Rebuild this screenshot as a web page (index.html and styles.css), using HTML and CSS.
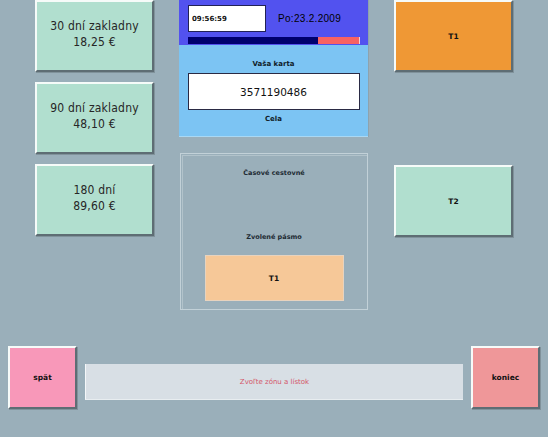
FILE: index.html
```html
<!DOCTYPE html>
<html lang="sk">
<head>
<meta charset="utf-8">
<title>Predaj cestovného</title>
<link rel="stylesheet" href="styles.css">
</head>
<body>
<div class="screen">
  <div class="upper">
    <div class="col col-side">
      <div class="btn btn-mint btn-fare"><span>30 dní zakladny</span><span>18,25 €</span></div>
      <div class="btn btn-mint btn-fare"><span>90 dní zakladny</span><span>48,10 €</span></div>
      <div class="btn btn-mint btn-fare"><span>180 dní</span><span>89,60 €</span></div>
    </div>

    <div class="col col-center">
      <div class="card-panel">
        <div class="status">
          <div class="status-row">
            <div class="clock">09:56:59</div>
            <div class="date">Po:23.2.2009</div>
          </div>
          <div class="progress"><div class="progress-fill" style="width:130px"></div></div>
        </div>
        <div class="card-info">
          <div class="label">Vaša karta</div>
          <div class="card-number">3571190486</div>
          <div class="label">Cela</div>
        </div>
      </div>

      <div class="ticket-panel">
        <div class="label label-dim">Časové cestovné</div>
        <div class="label label-dim zone-label">Zvolené pásmo</div>
        <div class="zone-box">T1</div>
      </div>
    </div>

    <div class="col col-side col-zones">
      <div class="btn btn-orange btn-zone">T1</div>
      <div class="btn btn-mint btn-zone">T2</div>
    </div>
  </div>

  <div class="lower">
    <div class="btn btn-pink btn-nav">spät</div>
    <div class="message">Zvoľte zónu a lístok</div>
    <div class="btn btn-rose btn-nav">koniec</div>
  </div>
</div>
</body>
</html>
```

FILE: styles.css
```css
html, body {
  margin: 0;
  padding: 0;
  background: #9aafba;
  font-family: "DejaVu Sans", Verdana, sans-serif;
  color: #111;
}

.screen {
  width: 548px;
  height: 437px;
  overflow: hidden;
}

.upper {
  display: flex;
  height: 346px;
  padding-left: 35px;
  gap: 26px;
}

.col {
  display: flex;
  flex-direction: column;
}

.col-side {
  width: 119px;
  gap: 10px;
}

.col-center {
  width: 190px;
  margin-left: -1px;
  margin-right: -1px;
  gap: 16px;
}

/* raised push buttons */
.btn {
  box-sizing: border-box;
  display: flex;
  flex-direction: column;
  align-items: center;
  justify-content: center;
  border-top: 2px solid #f6fbf9;
  border-left: 2px solid #f6fbf9;
  border-right: 2px solid #5e6d74;
  border-bottom: 2px solid #5e6d74;
  box-shadow: 1px 1px 0 #80929b;
}

.btn-mint { background: #b1dfcf; }
.btn-orange { background: #ef9835; }
.btn-pink { background: #f898b9; }
.btn-rose { background: #ef9799; }

.btn-fare {
  height: 72px;
  padding-bottom: 5px;
  font-family: "DejaVu Sans Condensed", "DejaVu Sans", sans-serif;
  font-size: 12px;
  line-height: 16px;
  letter-spacing: 0.2px;
  color: #262626;
}

.btn-zone {
  height: 72px;
  font-size: 7.5px;
  font-weight: bold;
}

.col-zones {
  gap: 93px;
}

/* card status panel */
.card-panel {
  height: 137px;
  display: flex;
  flex-direction: column;
  border-right: 1px solid #8ea2ac;
}

.status {
  box-sizing: border-box;
  height: 45px;
  background: #5252ef;
  padding: 5px 8px 0 9px;
}

.status-row {
  display: flex;
  align-items: center;
}

.clock {
  box-sizing: border-box;
  width: 78px;
  height: 27px;
  background: #fff;
  border: 1px solid #222255;
  padding-left: 3px;
  display: flex;
  align-items: center;
  font-size: 7px;
  font-weight: bold;
}

.date {
  margin-left: 12px;
  font-family: "Liberation Sans", Arial, sans-serif;
  font-size: 10px;
  letter-spacing: 0.3px;
  color: #000;
}

.progress {
  margin-top: 5px;
  width: 172px;
  height: 7px;
  background: #f86262;
  border-right: 1px solid #f0d0d8;
  box-sizing: border-box;
}

.progress-fill {
  height: 100%;
  background: #00006e;
}

.card-info {
  flex: 1;
  background: #7cc4f3;
  display: flex;
  flex-direction: column;
  align-items: center;
  padding-top: 15px;
  border-bottom: 1px solid #a9d8f4;
}

.label {
  font-size: 7px;
  font-weight: bold;
  line-height: 9px;
  color: #10202a;
}

.card-number {
  box-sizing: border-box;
  width: 172px;
  height: 37px;
  margin: 4px 0 5px;
  background: #fff;
  border: 1px solid #2a2a44;
  display: flex;
  align-items: center;
  justify-content: center;
  font-size: 10.5px;
  color: #111;
}

/* selected ticket panel */
.ticket-panel {
  box-sizing: border-box;
  height: 157px;
  margin: 0 1px;
  border: 1px solid #c2d1d8;
  box-shadow: inset 1px 1px 0 #9aafba, inset 2px 2px 0 #b2c3cb;
  display: flex;
  flex-direction: column;
  align-items: center;
  padding-top: 15px;
}

.label-dim {
  font-size: 6.5px;
  color: #1d2a33;
}

.zone-label {
  margin-top: 55px;
}

.zone-box {
  box-sizing: border-box;
  width: 139px;
  height: 46px;
  margin-top: 13px;
  background: #f6c898;
  border: 1px solid #e7d3bf;
  display: flex;
  align-items: center;
  justify-content: center;
  font-size: 7.5px;
  font-weight: bold;
}

/* bottom navigation row */
.lower {
  display: flex;
  align-items: flex-start;
  padding-left: 8px;
  gap: 8px;
}

.btn-nav {
  width: 69px;
  height: 63px;
  font-size: 7.5px;
  font-weight: bold;
}

.message {
  box-sizing: border-box;
  width: 378px;
  height: 36px;
  margin-top: 18px;
  background: #d8dfe5;
  border-left: 1px solid #f4f7f9;
  border-bottom: 1px solid #e8edf0;
  display: flex;
  align-items: center;
  justify-content: center;
  font-size: 7px;
  color: #d4566a;
}
```
